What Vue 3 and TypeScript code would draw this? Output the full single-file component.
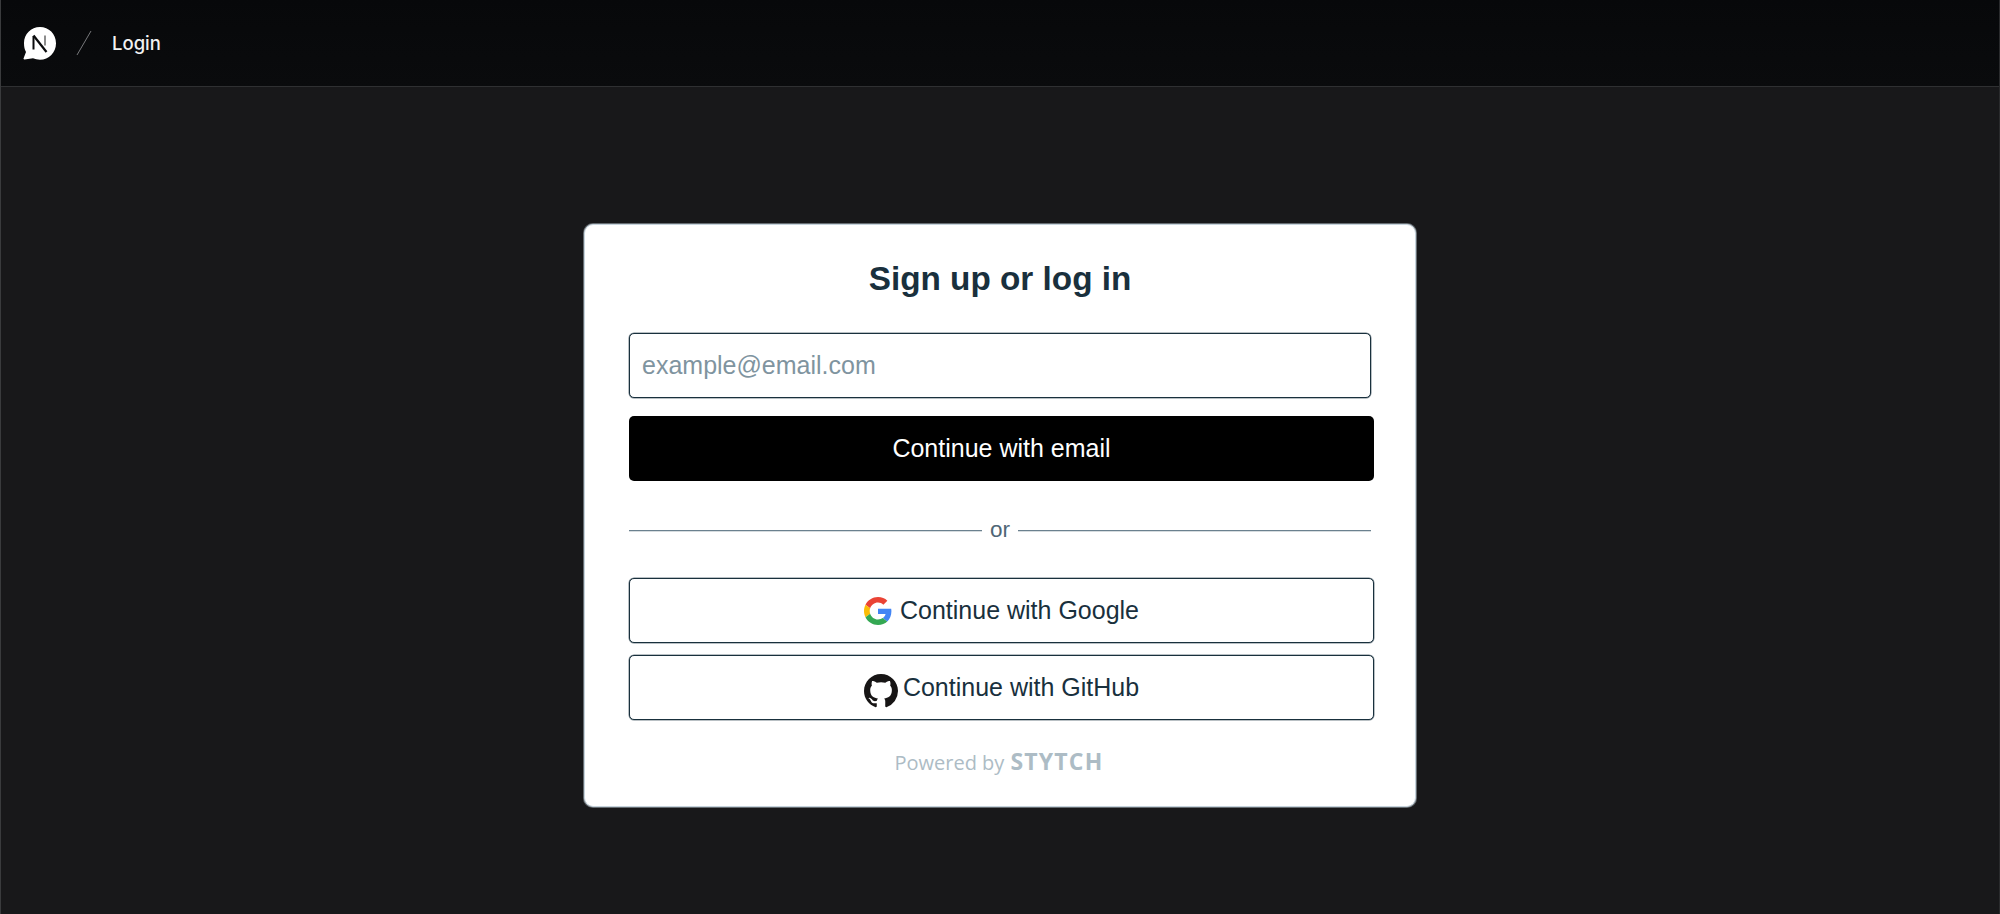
<script setup lang="ts">
const title: string = 'Sign up or log in'
</script>

<template>
  <div class="page">
    <header class="topbar">
      <svg class="logo" width="36" height="36" viewBox="0 0 36 36">
        <path d="M19 2C10 2 3 9 3 18c0 4 .6 6.5 2 9l-2.400 6.200c-.3.800.2 1.300 1 1.200l8.400-1.100c2.100.9 4.500 1.400 7 1.400 8.800 0 16-7.200 16-16.500S27.800 2 19 2z" fill="#fff"/>
        <path d="M12.500 11v13.500" stroke="#0a0b0d" stroke-width="2" fill="none"/>
        <path d="M12.500 10.500 25.500 27" stroke="#0a0b0d" stroke-width="2.200" fill="none"/>
        <path d="M24 10.500v10" stroke="#666" stroke-width="1.500" fill="none"/>
      </svg>
      <svg class="slash" width="16" height="26" viewBox="0 0 16 26"><path d="M15 1 1 25" stroke="#77787b" stroke-width="1"/></svg>
      <span class="crumb">Login</span>
    </header>
    <main class="main">
      <section class="card">
        <h1 class="title">{{ title }}</h1>
        <input class="email" type="text" placeholder="example@email.com" />
        <button class="primary">Continue with email</button>
        <div class="divider"><span class="rule"></span><span class="or">or</span><span class="rule"></span></div>
        <button class="oauth first">
          <svg width="28" height="28" viewBox="0 0 48 48">
            <path fill="#EA4335" d="M24 9.500c3.540 0 6.710 1.220 9.210 3.600l6.850-6.850C35.900 2.380 30.470 0 24 0 14.620 0 6.510 5.380 2.560 13.220l7.980 6.190C12.430 13.720 17.740 9.500 24 9.500z"/>
            <path fill="#4285F4" d="M46.980 24.550c0-1.570-.15-3.090-.38-4.550H24v9.020h12.940c-.58 2.960-2.260 5.480-4.780 7.180l7.730 6c4.510-4.180 7.090-10.360 7.090-17.650z"/>
            <path fill="#FBBC05" d="M10.530 28.590c-.48-1.450-.76-2.990-.76-4.590s.27-3.140.76-4.590l-7.980-6.190C.92 16.460 0 20.120 0 24c0 3.880.92 7.540 2.560 10.780l7.970-6.190z"/>
            <path fill="#34A853" d="M24 48c6.480 0 11.930-2.130 15.890-5.810l-7.730-6c-2.150 1.450-4.920 2.300-8.160 2.300-6.260 0-11.570-4.220-13.470-9.910l-7.980 6.190C6.510 42.620 14.620 48 24 48z"/>
          </svg>
          <span>Continue with Google</span>
        </button>
        <button class="oauth github">
          <svg class="gh" width="34" height="34" viewBox="0 0 16 16">
            <path fill="#171515" d="M8 0C3.580 0 0 3.580 0 8c0 3.540 2.290 6.530 5.470 7.590.4.070.55-.17.550-.38 0-.19-.01-.82-.01-1.490-2.010.37-2.530-.49-2.690-.94-.09-.23-.48-.94-.82-1.130-.28-.15-.68-.52-.01-.53.630-.01 1.080.58 1.230.82.720 1.210 1.870.87 2.330.66.070-.52.280-.87.510-1.070-1.780-.2-3.640-.89-3.640-3.950 0-.87.310-1.590.820-2.150-.08-.2-.36-1.020.08-2.120 0 0 .67-.21 2.200.82.640-.18 1.320-.27 2-.27s1.360.09 2 .27c1.530-1.040 2.200-.82 2.200-.82.440 1.100.16 1.920.08 2.120.51.560.82 1.270.82 2.150 0 3.070-1.870 3.750-3.650 3.950.29.250.54.730.54 1.480 0 1.070-.01 1.930-.01 2.200 0 .21.150.46.550.38A8.010 8.010 0 0 0 16 8c0-4.420-3.580-8-8-8z"/>
          </svg>
          <span>Continue with GitHub</span>
        </button>
        <div class="powered"><span>Powered by</span><b class="brand">STYTCH</b></div>
      </section>
    </main>
  </div>
</template>

<style>
html, body { margin: 0; background: #18181a; }
</style>

<style scoped>
.page {
  height: 914px;
  display: flex;
  flex-direction: column;
  box-sizing: border-box;
  border-left: 1px solid #3a3b3d;
  border-right: 1px solid #2a2b2d;
  background: #18181a;
  font-family: "Liberation Sans", Arial, sans-serif;
  overflow: hidden;
}
.topbar {
  height: 87px;
  flex: none;
  box-sizing: border-box;
  border-bottom: 1px solid #2f3032;
  background: linear-gradient(#07080a, #0a0b0d);
  display: flex;
  align-items: center;
  padding-left: 20px;
}
.slash { margin-left: 19px; }
.crumb {
  margin-left: 20px;
  color: #f2f2f2;
  font: 500 18.500px Inter, sans-serif;
}
.main {
  flex: 1;
  display: flex;
  justify-content: center;
}
.card {
  width: 832px;
  height: 583px;
  margin-top: 137px;
  margin-right: 0;
  box-sizing: border-box;
  background: #fff;
  border: 1px solid #c6d3dc;
  box-shadow: 0 0 0 1px rgba(198, 211, 220, .45);
  border-radius: 9px;
  padding: 0 41px 0 44px;
  display: flex;
  flex-direction: column;
  align-items: flex-start;
}
.title {
  align-self: stretch;
  margin: 35px 0 0;
  padding-right: 3px;
  text-align: center;
  color: #19303d;
  font-size: 33.300px;
  line-height: 38px;
  font-weight: 700;
}
.email {
  margin-top: 35px;
  width: 742px;
  height: 65px;
  box-sizing: border-box;
  border: 1px solid #19303d;
  box-shadow: 0 0 0 .5px rgba(25, 48, 61, .6);
  border-radius: 5px;
  padding: 0 12px;
  font: 25px "Liberation Sans", Arial, sans-serif;
  color: #19303d;
  background: #fff;
  outline: none;
}
.email::placeholder { color: #7f949f; opacity: 1; }
button {
  width: 745px;
  height: 65px;
  box-sizing: border-box;
  border-radius: 5px;
  font: 25px "Liberation Sans", Arial, sans-serif;
  padding: 0;
}
.primary {
  margin-top: 18px;
  border: 0;
  background: #000;
  color: #fff;
}
.divider {
  margin-top: 32px;
  width: 742px;
  height: 34px;
  display: flex;
  align-items: center;
  gap: 8px;
}
.rule {
  flex: 1;
  height: 1px;
  background: #6b818f;
  box-shadow: 0 .5px 0 rgba(92, 115, 130, .5);
}
.or { color: #4f6676; font-size: 22.500px; }
.oauth {
  background: #fff;
  border: 1px solid #19303d;
  box-shadow: 0 0 0 .5px rgba(25, 48, 61, .6);
  color: #19303d;
  display: flex;
  align-items: center;
  justify-content: center;
  gap: 8px;
}
.first { margin-top: 31px; }
.github { margin-top: 12px; gap: 5px; }
.gh { margin-top: 6px; }
.powered {
  align-self: center;
  margin: 25px 5px 0 0;
  display: flex;
  align-items: baseline;
  gap: 6px;
  color: #adbcc5;
  font: 20px "Open Sans", sans-serif;
}
.brand {
  font: 700 23px "Open Sans", sans-serif;
  letter-spacing: 1.200px;
}
</style>
